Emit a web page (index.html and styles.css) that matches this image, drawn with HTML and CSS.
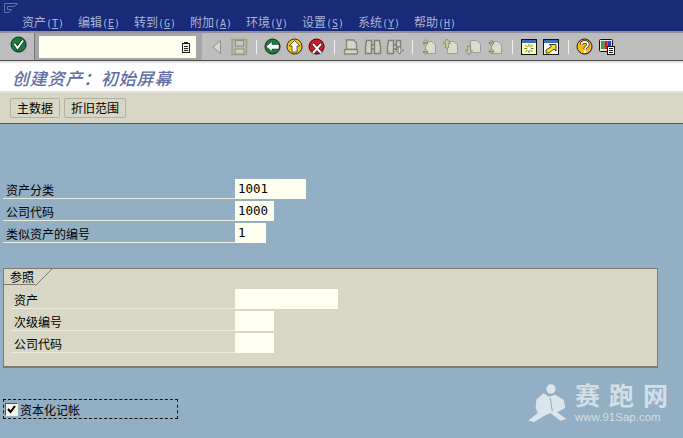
FILE: index.html
```html
<!DOCTYPE html>
<html lang="zh-CN">

<head>
    <meta charset="UTF-8" />
    <title>创建资产：初始屏幕</title>
    <link rel="stylesheet" href="styles.css">
</head>

<body>
    <div class="menubar">
        <svg class="menu-logo" width="16" height="12" viewBox="0 0 16 12">
            <path d="M2.5 1.5H15.5L12.5 4.5H5.5V7.5H9.5L7 10.5H2.5Z" fill="none" stroke="#6674aa" />
        </svg>
        <div class="menu-items">
            <span class="menu-item">资产<span class="key">(<u>T</u>)</span></span>
            <span class="menu-item">编辑<span class="key">(<u>E</u>)</span></span>
            <span class="menu-item">转到<span class="key">(<u>G</u>)</span></span>
            <span class="menu-item">附加<span class="key">(<u>A</u>)</span></span>
            <span class="menu-item">环境<span class="key">(<u>V</u>)</span></span>
            <span class="menu-item">设置<span class="key">(<u>S</u>)</span></span>
            <span class="menu-item">系统<span class="key">(<u>Y</u>)</span></span>
            <span class="menu-item">帮助<span class="key">(<u>H</u>)</span></span>
        </div>
    </div>

    <div class="toolbar">
        <div class="tool-enter">
            <svg width="18" height="18" viewBox="0 0 18 18">
                <circle cx="9.5" cy="9.5" r="7.5" fill="#a9a4cc" />
                <circle cx="8.5" cy="8.5" r="7.5" fill="#17803a" stroke="#0c2c18" />
                <path d="M4.5 8L7.5 12L13 4.5" fill="none" stroke="#0c2c18" stroke-width="3.6" />
                <path d="M4.5 8L7.5 12L13 4.5" fill="none" stroke="#fff" stroke-width="2" />
            </svg>
        </div>
        <div class="command-box">
            <div class="command-field">
                <svg width="10" height="11" viewBox="0 0 10 11">
                    <rect x="1.5" y="1.5" width="7" height="9" fill="#eee" stroke="#222" />
                    <path d="M3 0.5H7M3 4.5H7M3 6.5H7M3 8.5H7" stroke="#222" />
                </svg>
            </div>
        </div>
        <div class="tool-icons">
            <span class="tool">
                <svg width="18" height="18" viewBox="0 0 18 18">
                    <path d="M12.5 2.5V15.5L5 9Z" fill="#d8d8d8" stroke="#8c8c8c" />
                </svg>
            </span>
            <span class="tool">
                <svg width="18" height="18" viewBox="0 0 18 18">
                    <rect x="2" y="1.5" width="14.5" height="15" fill="#b9b9a8" stroke="#a89f80" stroke-width="1.5" />
                    <rect x="5.5" y="2.5" width="8" height="5.5" fill="#c8c8c8" stroke="#8f8f88" />
                    <rect x="5" y="11" width="9" height="5" fill="#d0d0c8" stroke="#8f8f88" />
                </svg>
            </span>
            <span class="tool-sep"></span>
            <span class="tool">
                <svg width="18" height="18" viewBox="0 0 18 18">
                    <circle cx="9.5" cy="9.5" r="7.5" fill="#a9a4cc" />
                    <circle cx="8.5" cy="8.5" r="7.5" fill="#17803a" stroke="#0c2c18" />
                    <path d="M2 8.5L8 3.5V6.5H15V11H8V13.5Z" fill="#fff" stroke="#0c2c18" stroke-width="0.5" />
                </svg>
            </span>
            <span class="tool">
                <svg width="18" height="18" viewBox="0 0 18 18">
                    <circle cx="9.5" cy="9.5" r="7.5" fill="#a9a4cc" />
                    <circle cx="8.5" cy="8.5" r="7.5" fill="#f7c51c" stroke="#3a2a00" />
                    <path d="M8.5 2.5L14 8H11V14H6V8H3Z" fill="#fff" stroke="#222" stroke-width="0.7" />
                </svg>
            </span>
            <span class="tool">
                <svg width="18" height="18" viewBox="0 0 18 18">
                    <circle cx="9.5" cy="9.5" r="7.5" fill="#a9a4cc" />
                    <circle cx="8.5" cy="8.5" r="7.5" fill="#dc1420" stroke="#3d0408" />
                    <path d="M5 6L13 15M13 6L5 15" stroke="#222" stroke-width="3.4" />
                    <path d="M5 6L13 15M13 6L5 15" stroke="#fff" stroke-width="2" />
                </svg>
            </span>
            <span class="tool-sep"></span>
            <span class="tool">
                <svg width="18" height="18" viewBox="0 0 18 18">
                    <path d="M4.5 2H11.5L14.5 5V11.5H4.5Z" fill="#d6d6c8" stroke="#85857d" stroke-width="1.4" />
                    <rect x="2.5" y="11.5" width="13" height="4.5" rx="1" fill="#d6d6c8" stroke="#85857d" stroke-width="1.4" />
                </svg>
            </span>
            <span class="tool">
                <svg width="18" height="18" viewBox="0 0 18 18">
                    <path d="M2.5 2.5H7.5V15.5H1.5V9ZM10.5 2.5H15.5L16.5 9V15.5H10.5ZM7.5 7H10.5V11H7.5Z" fill="#cfcfc3" stroke="#7f7f78" stroke-width="1.4" />
                </svg>
            </span>
            <span class="tool">
                <svg width="18" height="18" viewBox="0 0 18 18">
                    <path d="M2.5 2.5H7.5V15.5H1.5V9ZM10.5 2.5H14.5V9H10.5V2.5ZM7.5 7H10.5V11H7.5Z" fill="#cfcfc3" stroke="#7f7f78" stroke-width="1.4" />
                    <path d="M13.5 8.5V16M10 12.2H17.5" stroke="#7f7f78" stroke-width="2.6" />
                    <path d="M13.5 9.5V15M11 12.2H16.5" stroke="#e0e0d6" />
                </svg>
            </span>
            <span class="tool-sep"></span>
            <span class="tool">
                <svg width="18" height="18" viewBox="0 0 18 18">
                    <path d="M5.5 3.5H12L15.5 7V15.5H5.5Z" fill="#dcdccc" stroke="#9a9aa8" />
                    <path d="M5.5 1.5L8 4.5H3ZM5.5 8.5L8 5.5H3ZM5.5 11L8 14H3ZM5.5 16.5L8 14H3Z" fill="#c8c89a" stroke="#7d7d6c" stroke-width="0.7" />
                </svg>
            </span>
            <span class="tool">
                <svg width="18" height="18" viewBox="0 0 18 18">
                    <path d="M5.5 3.5H12L15.5 7V15.5H5.5Z" fill="#dcdccc" stroke="#9a9aa8" />
                    <path d="M5 1L8.5 5.5H6.5V10H3.5V5.5H1.5Z" fill="#c8c89a" stroke="#7d7d6c" stroke-width="0.7" />
                </svg>
            </span>
            <span class="tool">
                <svg width="18" height="18" viewBox="0 0 18 18">
                    <path d="M6.5 2.5H13L16.5 6V14.5H6.5Z" fill="#dcdccc" stroke="#9a9aa8" />
                    <path d="M5 17L8.5 12.5H6.5V8H3.5V12.5H1.5Z" fill="#c8c89a" stroke="#7d7d6c" stroke-width="0.7" />
                </svg>
            </span>
            <span class="tool">
                <svg width="18" height="18" viewBox="0 0 18 18">
                    <path d="M5.5 3.5H12L15.5 7V15.5H5.5Z" fill="#dcdccc" stroke="#9a9aa8" />
                    <path d="M5.5 2L8 5H3ZM5.5 8L8 5H3ZM5.5 10.5L8 13.5H3ZM5.5 16L8 13.5H3Z" fill="#c8c89a" stroke="#7d7d6c" stroke-width="0.7" />
                </svg>
            </span>
            <span class="tool-sep"></span>
            <span class="tool">
                <svg width="18" height="18" viewBox="0 0 18 18">
                    <rect x="1.5" y="1.5" width="15" height="15" fill="#ffffb0" stroke="#111" />
                    <rect x="2" y="2" width="14" height="3" fill="#3f6fc0" />
                    <path d="M9 6V15M4.5 10.5H13.5M5.5 7L12.5 14M12.5 7L5.5 14" stroke="#4a4a30" stroke-width="0.8" />
                    <circle cx="9" cy="10.5" r="2" fill="#fff" />
                </svg>
            </span>
            <span class="tool">
                <svg width="18" height="18" viewBox="0 0 18 18">
                    <rect x="1.5" y="1.5" width="15" height="15" fill="#fff" stroke="#111" />
                    <rect x="2" y="2" width="14" height="3" fill="#3f6fc0" />
                    <path d="M4 15V12L9.5 8.5L7.5 6.5H14V13L12 11L7 15Z" fill="#ffe020" stroke="#111" stroke-width="0.8" />
                </svg>
            </span>
            <span class="tool-sep"></span>
            <span class="tool">
                <svg width="18" height="18" viewBox="0 0 18 18">
                    <circle cx="9.5" cy="9.5" r="7.5" fill="#a9a4cc" />
                    <circle cx="8.5" cy="8.5" r="7.5" fill="#f9b80c" stroke="#2c1c00" />
                    <path d="M5.5 6.5C5.5 3 12 3 12 6.5C12 9 9 8.5 9 11" fill="none" stroke="#222" stroke-width="3.2" />
                    <path d="M5.5 6.5C5.5 3 12 3 12 6.5C12 9 9 8.5 9 11" fill="none" stroke="#fff" stroke-width="1.8" />
                    <rect x="7.8" y="12.5" width="2.4" height="2.4" fill="#fff" />
                </svg>
            </span>
            <span class="tool">
                <svg width="18" height="18" viewBox="0 0 18 18">
                    <rect x="1.5" y="1.5" width="13" height="12" rx="1" fill="#e8e8e8" stroke="#111" />
                    <rect x="3" y="3" width="3.5" height="8" fill="#20b040" />
                    <rect x="6.5" y="3" width="3" height="8" fill="#e01020" />
                    <rect x="9.5" y="3" width="3.5" height="8" fill="#2040d0" />
                    <rect x="9.5" y="8.5" width="7" height="8" fill="#fff" stroke="#111" />
                    <path d="M11 10.5H15M11 12.5H15M11 14.5H15" stroke="#111" />
                </svg>
            </span>
        </div>
    </div>

    <div class="title-bar">
        <h1>创建资产：初始屏幕</h1>
    </div>

    <div class="app-toolbar">
        <button class="app-btn">主数据</button>
        <button class="app-btn">折旧范围</button>
    </div>

    <div class="content">
        <div class="form-rows">
            <div class="form-row">
                <label class="form-label">资产分类</label>
                <div class="input input-wide">1001</div>
            </div>
            <div class="form-row">
                <label class="form-label">公司代码</label>
                <div class="input input-mid">1000</div>
            </div>
            <div class="form-row">
                <label class="form-label">类似资产的编号</label>
                <div class="input input-small">1</div>
            </div>
        </div>

        <div class="group-box">
            <div class="group-tab">
                <span class="group-title">参照</span>
                <svg class="group-tab-edge" width="17" height="17" viewBox="0 0 17 17">
                    <path d="M0 17L17 0" stroke="#7b7b6f" fill="none" />
                </svg>
            </div>
            <div class="group-rows">
                <div class="form-row">
                    <label class="form-label">资产</label>
                    <div class="input input-long"></div>
                </div>
                <div class="form-row">
                    <label class="form-label">次级编号</label>
                    <div class="input input-mid"></div>
                </div>
                <div class="form-row">
                    <label class="form-label">公司代码</label>
                    <div class="input input-mid"></div>
                </div>
            </div>
        </div>

        <div class="check-row">
            <span class="check-box">
                <svg width="9" height="9" viewBox="0 0 9 9">
                    <path d="M1 4L3.5 7L8 1" fill="none" stroke="#000" stroke-width="2" />
                </svg>
            </span>
            <span>资本化记帐</span>
        </div>
    </div>

    <!-- site watermark, sits over the screen -->
    <div class="watermark">
        <svg width="40" height="40" viewBox="80 100 120 120">
            <circle cx="152" cy="118" r="14" fill="#dbe5ec" />
            <path d="M108 150L130 130L145 141L165 135L190 150L195 175L170 188L198 208L180 213L150 190L130 200L100 218L85 212L112 190L106 175Z" fill="#dbe5ec" />
            <path d="M150 145L156 186" stroke="#93afc3" stroke-width="3" />
        </svg>
        <div class="watermark-text">
            <div class="watermark-name">赛跑网</div>
            <div class="watermark-url">www.91Sap.com</div>
        </div>
    </div>
</body>

</html>
```

FILE: styles.css
```css
body {
    margin: 0;
    width: 683px;
    height: 438px;
    overflow: hidden;
    position: relative;
    background-color: #93afc3;
    color: #000;
    font-family: "Noto Sans CJK SC", "Liberation Sans", sans-serif;
    font-size: 12px;
}

.menubar {
    height: 31px;
    background-color: #182a78;
    box-sizing: border-box;
    padding: 2px 0 0 2px;
}

.menu-logo {
    display: block;
}

.menu-items {
    display: flex;
    margin-left: 20px;
}

.menu-item {
    width: 56px;
    height: 16px;
    line-height: 16px;
    color: #a9b5d6;
    white-space: nowrap;
}

.key {
    font-family: "DejaVu Sans Mono", monospace;
    font-size: 10px;
}

.toolbar {
    height: 30px;
    box-sizing: border-box;
    display: flex;
    background-color: #bdbdbd;
    border-top: 2px solid #8d8f9c;
    border-bottom: 1px solid #4c4c4c;
}

.tool-enter {
    width: 35px;
    box-sizing: border-box;
    padding: 3px 0 0 10px;
    border-right: 1px solid #767676;
}

.command-box {
    width: 167px;
    box-sizing: border-box;
    padding: 3px 6px 2px 4px;
    background-color: #a6a6a6;
}

.command-field {
    height: 22px;
    box-sizing: border-box;
    padding-right: 5px;
    display: flex;
    align-items: center;
    justify-content: flex-end;
    background-color: #ffffef;
}

.tool-icons {
    display: flex;
    align-items: center;
    padding-left: 4px;
}

.tool {
    width: 22px;
    display: flex;
    justify-content: center;
}

.tool-sep {
    width: 12px;
    height: 14px;
    display: flex;
    justify-content: center;
}

.tool-sep::before {
    content: "";
    width: 1px;
    background-color: #f0f0f0;
}

.title-bar {
    height: 32px;
    box-sizing: border-box;
    padding-left: 12px;
    background-color: #fff;
    border-top: 2px solid #e4e4e4;
    border-bottom: 2px solid #e2e2da;
}

.title-bar h1 {
    margin: 0;
    line-height: 29px;
    font-size: 17px;
    font-weight: 500;
    font-style: italic;
    letter-spacing: 0.8px;
    color: #5f6da4;
}

.app-toolbar {
    height: 31px;
    box-sizing: border-box;
    display: flex;
    gap: 4px;
    padding: 5px 0 0 10px;
    background-color: #d8d6c4;
    border-bottom: 1px solid #4b5a60;
}

.app-btn {
    height: 20px;
    padding: 0 6px;
    font-family: inherit;
    font-size: 12px;
    line-height: 16px;
    color: #000;
    background-color: #d8d6c4;
    border: 1px solid #b2b09f;
    border-radius: 2px;
}

.content {
    padding: 55px 0 0 3px;
}

.form-rows {
    display: flex;
    flex-direction: column;
    gap: 2px;
}

.form-row {
    display: flex;
    height: 20px;
}

.form-label {
    width: 229px;
    height: 19px;
    padding-left: 3px;
    line-height: 21px;
    border-bottom: 1px solid #ecebdc;
}

.input {
    height: 20px;
    box-sizing: border-box;
    padding-left: 3px;
    background-color: #ffffef;
    font-family: "DejaVu Sans Mono", monospace;
    font-size: 12.5px;
    line-height: 20px;
}

.input-wide {
    width: 71px;
}

.input-mid {
    width: 39px;
}

.input-small {
    width: 31px;
}

.input-long {
    width: 103px;
}

.group-box {
    width: 655px;
    height: 100px;
    box-sizing: border-box;
    margin-top: 25px;
    background-color: #d8d6c4;
    border: 1px solid #7b7b6f;
    border-bottom-width: 2px;
}

.group-tab {
    display: flex;
    height: 16px;
}

.group-title {
    width: 31px;
    padding-left: 6px;
    box-sizing: border-box;
    line-height: 16px;
    border-bottom: 1px solid #7b7b6f;
}

.group-tab-edge {
    flex-shrink: 0;
}

.group-rows {
    display: flex;
    flex-direction: column;
    gap: 2px;
    margin-top: 4px;
    padding-left: 7px;
}

.group-rows .form-label {
    width: 221px;
}

.check-row {
    width: 175px;
    height: 20px;
    box-sizing: border-box;
    margin-top: 31px;
    padding-left: 1px;
    display: flex;
    align-items: center;
    gap: 2px;
    border: 1px dashed #111;
}

.check-box {
    width: 13px;
    height: 13px;
    box-sizing: border-box;
    display: flex;
    align-items: center;
    justify-content: center;
    background-color: #f4f4e8;
    border: 1px solid #555;
    border-right-color: #eee;
    border-bottom-color: #eee;
}

.watermark {
    position: absolute;
    left: 527px;
    top: 383px;
    display: flex;
    gap: 8px;
    color: #d3dfe7;
}

.watermark-name {
    font-family: "Liberation Serif", "Noto Sans CJK SC", serif;
    font-size: 25px;
    font-weight: bold;
    line-height: 27px;
    letter-spacing: 9px;
    white-space: nowrap;
}

.watermark-url {
    font-family: "Liberation Sans", sans-serif;
    font-size: 11.5px;
    line-height: 14px;
    white-space: nowrap;
}
```
